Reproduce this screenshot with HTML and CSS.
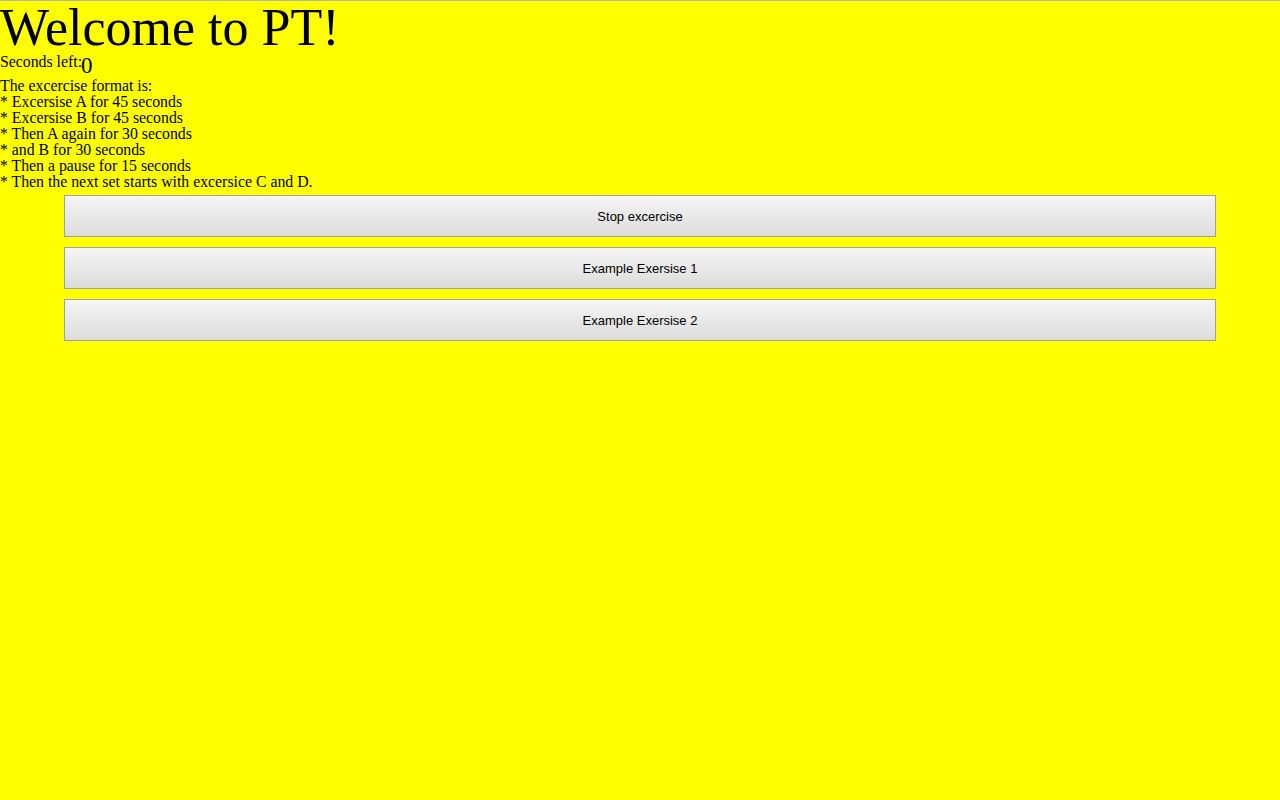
FILE: index.html
```html
<!DOCTYPE html>
<html>
<head>
<meta charset="utf-8">
<link rel="stylesheet" href="styles.css">
</head>
<body>
<div class="page">
  <h1 class="title">Welcome to PT!</h1>
  <div class="timer">Seconds left:<span class="count">0</span></div>
  <div class="format">
    <div>The excercise format is:</div>
    <div>* Excersise A for 45 seconds</div>
    <div>* Excersise B for 45 seconds</div>
    <div>* Then A again for 30 seconds</div>
    <div>* and B for 30 seconds</div>
    <div>* Then a pause for 15 seconds</div>
    <div>* Then the next set starts with excersice C and D.</div>
  </div>
  <div class="buttons">
    <button class="btn">Stop excercise</button>
    <button class="btn">Example Exersise 1</button>
    <button class="btn">Example Exersise 2</button>
  </div>
</div>
</body>
</html>
```
FILE: styles.css
```css
html, body {
  margin: 0;
  padding: 0;
  background: #ffff00;
  height: 100%;
}
body {
  border-top: 1px solid #b4b4b4;
  box-sizing: border-box;
  font-family: "Liberation Serif", "Times New Roman", serif;
  font-size: 15.8px;
  color: #000;
}
.title {
  margin: 0;
  font-size: 52px;
  font-weight: normal;
  line-height: 53px;
}
.timer {
  height: 24px;
  line-height: 16px;
}
.count {
  font-size: 23px;
  line-height: 16px;
  vertical-align: -6px;
  margin-left: -1px;
}
.format {
  line-height: 16px;
}
.buttons {
  display: flex;
  flex-direction: column;
  align-items: center;
  gap: 10px;
  margin-top: 5px;
}
.btn {
  width: 1152px;
  height: 42px;
  border: 1px solid #a0a0a0;
  border-radius: 0;
  background: linear-gradient(to bottom, #f5f5f5, #dcdcdc);
  font-family: "Liberation Sans", Arial, sans-serif;
  font-size: 13px;
  color: #000;
  padding: 0;
}
```
